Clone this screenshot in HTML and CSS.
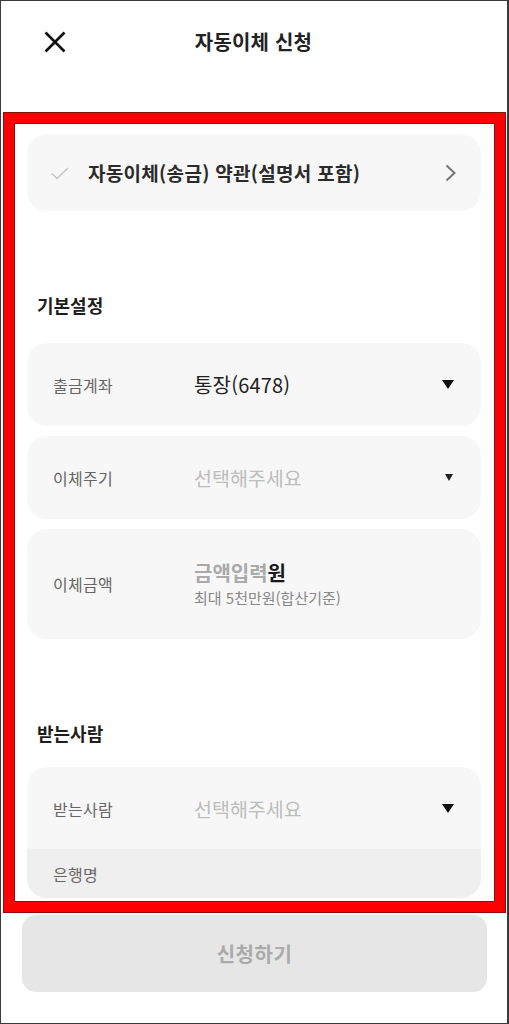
FILE: index.html
```html
<!DOCTYPE html>
<html lang="ko">
<head>
<meta charset="utf-8">
<title>자동이체 신청</title>
<link rel="stylesheet" href="styles.css">
</head>
<body>
<div class="screen">
  <header class="header">
    <div class="close">
      <svg width="22" height="22" viewBox="0 0 22 22"><path d="M1.5 1.5 L20.5 20.5 M20.5 1.5 L1.5 20.5" stroke="#111" stroke-width="2.6" fill="none"/></svg>
    </div>
    <h1 class="title">자동이체 신청</h1>
    <div></div>
  </header>

  <main class="content">
    <div class="card terms">
      <svg class="check" width="18" height="13" viewBox="0 0 18 13"><path d="M1 6.5 L6 11.5 L17 1" stroke="#c6c6c6" stroke-width="1.6" fill="none"/></svg>
      <span class="terms-text">자동이체(송금) 약관(설명서 포함)</span>
      <svg class="chev" width="11" height="18" viewBox="0 0 11 18"><path d="M1.5 1.5 L9.5 9 L1.5 16.5" stroke="#777" stroke-width="2" fill="none"/></svg>
    </div>

    <h2 class="section first">기본설정</h2>

    <div class="card row">
      <span class="label">출금계좌</span>
      <span class="value">통장(6478)</span>
      <span class="tri big"></span>
    </div>
    <div class="card row">
      <span class="label">이체주기</span>
      <span class="placeholder">선택해주세요</span>
      <span class="tri small"></span>
    </div>
    <div class="card row amount">
      <span class="label">이체금액</span>
      <div class="amount-box">
        <div class="amount-main"><span class="amount-ph">금액입력</span><span class="won">원</span></div>
        <div class="amount-sub">최대 5천만원(합산기준)</div>
      </div>
    </div>

    <h2 class="section second">받는사람</h2>

    <div class="card receiver">
      <div class="row recv-row">
        <span class="label">받는사람</span>
        <span class="placeholder">선택해주세요</span>
        <span class="tri big"></span>
      </div>
      <div class="bank-row">
        <span class="label">은행명</span>
      </div>
    </div>
  </main>

  <div class="btn-wrap">
    <button class="submit">신청하기</button>
  </div>

  <div class="highlight"></div>
</div>
</body>
</html>
```

FILE: styles.css
```css
* { box-sizing: border-box; margin: 0; padding: 0; }

html, body {
  width: 509px;
  height: 1024px;
  background: #fff;
}

body {
  font-family: "Noto Sans CJK KR", "Noto Sans", sans-serif;
  color: #222;
}

.screen {
  position: relative;
  width: 509px;
  height: 1024px;
  border: 1px solid #3a3a3a;
  border-width: 1px 2px 1px 1px;
  overflow: hidden;
}

.header {
  height: 81px;
  display: grid;
  grid-template-columns: 1fr auto 1fr;
  align-items: center;
}

.close {
  padding-left: 43px;
  display: flex;
  align-items: center;
  padding-top: 1px;
}

.title {
  font-size: 20px;
  font-weight: 700;
  color: #222;
  letter-spacing: 0.2px;
  margin-right: 1px;
}

.content {
  padding: 0 26px;
}

.card {
  background: #f7f7f7;
  border-radius: 20px;
}

.terms {
  margin-top: 52px;
  height: 77px;
  display: flex;
  align-items: center;
  padding: 0 24px 0 24px;
}

.check { flex: none; margin-top: 1px; }

.terms-text {
  margin-left: 19px;
  font-size: 19px;
  font-weight: 700;
  color: #2b2b2b;
  flex: 1;
  letter-spacing: 0.3px;
}

.chev { flex: none; margin-right: 1px; }

.section {
  font-size: 18px;
  font-weight: 700;
  color: #1e1e1e;
  line-height: 24px;
  padding-left: 10px;
}

.section.first { margin-top: 82px; }
.section.second { margin-top: 82px; }

.row {
  display: flex;
  align-items: center;
  height: 83px;
  padding: 0 26px;
}

.section + .row { margin-top: 26px; }
.row + .row { margin-top: 10px; }

.label {
  width: 141px;
  flex: none;
  font-size: 16px;
  letter-spacing: 0.3px;
  color: #666;
}

.value {
  flex: 1;
  font-size: 20px;
  color: #222;
  letter-spacing: 0.2px;
}

.placeholder {
  flex: 1;
  font-size: 19.5px;
  color: #bdbdbd;
}

.tri {
  flex: none;
  width: 0;
  height: 0;
  border-style: solid;
  border-color: transparent;
}

.tri.big {
  border-width: 9px 6px 0 6px;
  border-top-color: #111;
  margin-right: 1px;
}

.tri.small {
  border-width: 7px 4.5px 0 4.5px;
  border-top-color: #222;
  margin-right: 2px;
}

.amount {
  height: 110px;
  align-items: center;
}

.amount-box {
  display: flex;
  flex-direction: column;
  gap: 2px;
  margin-top: -2px;
}

.amount-main {
  font-size: 20px;
  font-weight: 700;
  line-height: 27px;
}

.amount-ph { color: #aaa; }
.won { color: #1a1a1a; }

.amount-sub {
  font-size: 15px;
  color: #888;
  line-height: 20px;
}

.receiver {
  margin-top: 22px;
  overflow: hidden;
}

.recv-row {
  height: 82px;
  padding-top: 1px;
}

.bank-row {
  height: 49px;
  background: #efefef;
  display: flex;
  align-items: center;
  padding: 0 26px;
}

.btn-wrap {
  position: absolute;
  left: 0;
  right: 0;
  top: 914px;
  padding: 0 20px 0 21px;
}

.submit {
  width: 100%;
  height: 77px;
  border: none;
  border-radius: 14px;
  background: #e6e6e6;
  color: #aaa;
  font-family: "Noto Sans CJK KR", sans-serif;
  font-size: 20px;
  font-weight: 700;
  letter-spacing: 0.5px;
}

.highlight {
  position: absolute;
  left: 3px;
  top: 112px;
  width: 501px;
  height: 799px;
  border: 10px solid #ff0000;
  box-shadow: 0 0 0 1px #8a1010, inset 0 0 0 1px #8a1010;
  pointer-events: none;
}
```
